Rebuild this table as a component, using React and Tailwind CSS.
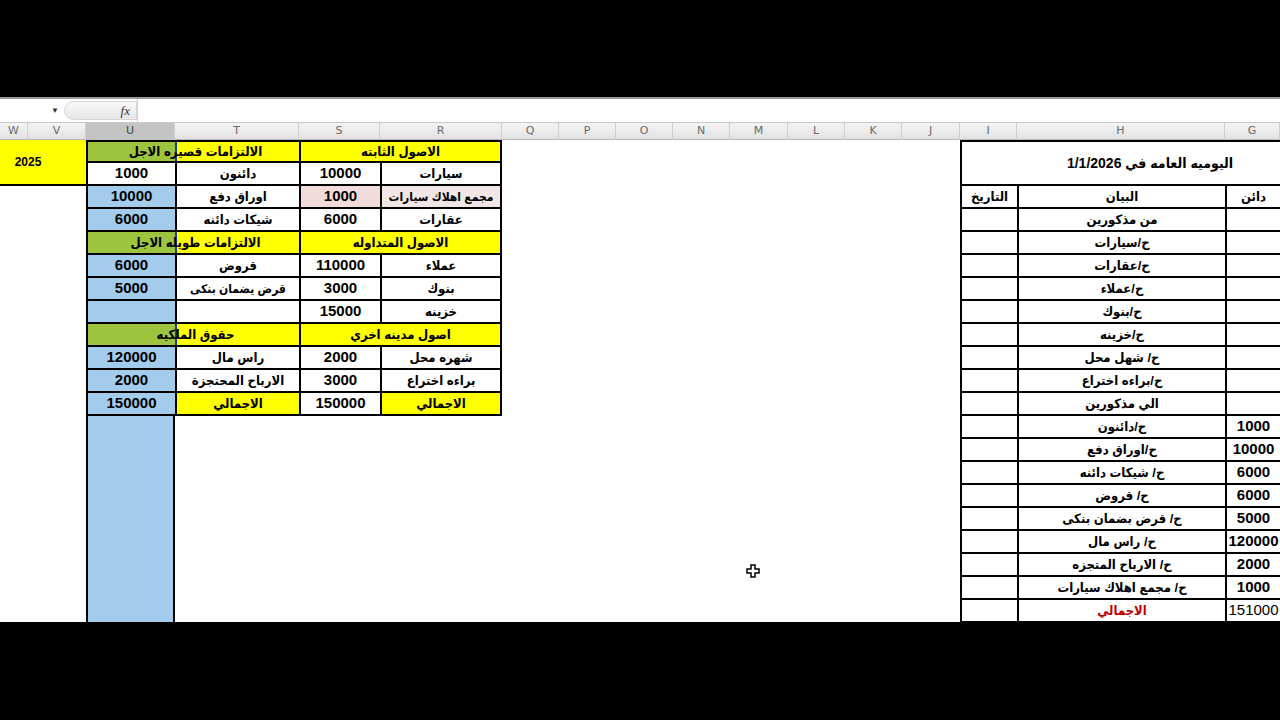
import React from "react";
import clsx from "clsx";

const cols = ["W", "V", "U", "T", "S", "R", "Q", "P", "O", "N", "M", "L", "K", "J", "I", "H", "G"];

const Cell = ({ className, children }) => (
  <div
    dir="rtl"
    className={clsx(
      "flex items-center justify-center overflow-hidden whitespace-nowrap border-black font-bold",
      className
    )}
  >
    {children}
  </div>
);

const journal = [
  ["من مذكورين", ""],
  ["ح/سيارات", ""],
  ["ح/عقارات", ""],
  ["ح/عملاء", ""],
  ["ح/بنوك", ""],
  ["ح/خزينه", ""],
  ["ح/ شهل محل", ""],
  ["ح/براءه اختراع", ""],
  ["الي مذكورين", ""],
  ["ح/دائنون", "1000"],
  ["ح/اوراق دفع", "10000"],
  ["ح/ شيكات دائنه", "6000"],
  ["ح/ قروض", "6000"],
  ["ح/ قرض بضمان بنكى", "5000"],
  ["ح/ راس مال", "120000"],
  ["ح/ الارباح المتجزه", "2000"],
  ["ح/ مجمع اهلاك سيارات", "1000"],
];

const rowStart = [
  "row-start-4", "row-start-5", "row-start-6", "row-start-7", "row-start-8", "row-start-9",
  "row-start-10", "row-start-11", "row-start-12", "row-start-13", "row-start-14", "row-start-15",
  "row-start-16", "row-start-17", "row-start-18", "row-start-19", "row-start-20",
];

const blue = "bg-[#a3cbeb]";
const yellow = "bg-[#ffff00]";
const splitHead = "bg-[linear-gradient(to_right,#9cc43e_87px,#1f3f8f_87px,#1f3f8f_89px,#ffff00_89px)]";

export default function App() {
  return (
    <div className="w-[1280px] h-[720px] overflow-hidden bg-black font-['Liberation_Sans','DejaVu_Sans_Condensed','DejaVu_Sans',sans-serif] text-[13px] text-black">
      <div className="h-[97px] bg-black" />

      {/* formula bar */}
      <div className="h-[26px] flex bg-white border-t-2 border-[#9a9a9a] border-b border-b-[#c9c9c9]">
        <div className="w-[64px] flex items-center justify-end pr-[5px]">
          <span className="text-[8px] text-[#333]">▼</span>
        </div>
        <div className="w-[73px] my-[2px] rounded-l-full bg-[linear-gradient(to_bottom,#f8f8f8,#e6e6e6)] border border-[#d6d6d6] flex items-center justify-end pr-[6px]">
          <span className="font-['Liberation_Serif',serif] italic text-[13px] text-[#333]">fx</span>
        </div>
        <div className="flex-1 border-l border-[#d0d0d0]" />
      </div>

      {/* column header */}
      <div className="h-[17px] grid grid-cols-[28px_58px_89px_124px_81px_122px_57px_57px_57px_57px_58px_57px_57px_58px_57px_208px_55px] bg-[linear-gradient(to_bottom,#f4f4f4,#e2e2e2)] border-b border-[#b8b8b8]">
        {cols.map((c) => (
          <div
            key={c}
            className={clsx(
              "flex items-center justify-center text-[11px] border-r border-[#cfcfcf] font-['DejaVu_Sans',sans-serif]",
              c === "U" ? "bg-[#c4c4c4] text-[#444]" : "text-[#6a6a6a]"
            )}
          >
            {c}
          </div>
        ))}
      </div>

      {/* sheet */}
      <div className="relative h-[482px] overflow-hidden bg-white grid grid-cols-[28px_58px_89px_124px_81px_122px_57px_57px_57px_57px_58px_57px_57px_58px_57px_208px_55px] auto-rows-[23px]">
        <Cell className={clsx("col-start-1 col-span-2 row-start-1 row-span-2 border-b-2 text-[12px] pr-[30px]", yellow)}>2025</Cell>

        {/* left table */}
        <Cell className={clsx("col-start-3 col-span-2 row-start-1 border-l-2 border-t-2 border-b-2 pl-[4px]", splitHead)}>الالتزامات قصيره الاجل</Cell>
        <Cell className={clsx("col-start-5 col-span-2 row-start-1 border-l-2 border-t-2 border-b-2 border-r-2", yellow)}>الاصول الثابته</Cell>

        <Cell className="col-start-3 row-start-2 border-l-2 border-b-2 bg-white text-[15px]">1000</Cell>
        <Cell className="col-start-4 row-start-2 border-l-2 border-b-2">دائنون</Cell>
        <Cell className="col-start-5 row-start-2 border-l-2 border-b-2 text-[15px]">10000</Cell>
        <Cell className="col-start-6 row-start-2 border-l-2 border-b-2 border-r-2">سيارات</Cell>

        <Cell className={clsx("col-start-3 row-start-3 border-l-2 border-b-2 text-[15px]", blue)}>10000</Cell>
        <Cell className="col-start-4 row-start-3 border-l-2 border-b-2">اوراق دفع</Cell>
        <Cell className="col-start-5 row-start-3 border-l-2 border-b-2 bg-[#f2dcdb] text-[15px]">1000</Cell>
        <Cell className="col-start-6 row-start-3 border-l-2 border-b-2 border-r-2 bg-[#f1e6e6] text-[12px]">مجمع اهلاك سيارات</Cell>

        <Cell className={clsx("col-start-3 row-start-4 border-l-2 border-b-2 text-[15px]", blue)}>6000</Cell>
        <Cell className="col-start-4 row-start-4 border-l-2 border-b-2">شيكات دائنه</Cell>
        <Cell className="col-start-5 row-start-4 border-l-2 border-b-2 text-[15px]">6000</Cell>
        <Cell className="col-start-6 row-start-4 border-l-2 border-b-2 border-r-2">عقارات</Cell>

        <Cell className={clsx("col-start-3 col-span-2 row-start-5 border-l-2 border-b-2 pl-[4px]", splitHead)}>الالتزامات طويله الاجل</Cell>
        <Cell className={clsx("col-start-5 col-span-2 row-start-5 border-l-2 border-b-2 border-r-2", yellow)}>الاصول المتداوله</Cell>

        <Cell className={clsx("col-start-3 row-start-6 border-l-2 border-b-2 text-[15px]", blue)}>6000</Cell>
        <Cell className="col-start-4 row-start-6 border-l-2 border-b-2">قروض</Cell>
        <Cell className="col-start-5 row-start-6 border-l-2 border-b-2 text-[15px]">110000</Cell>
        <Cell className="col-start-6 row-start-6 border-l-2 border-b-2 border-r-2">عملاء</Cell>

        <Cell className={clsx("col-start-3 row-start-7 border-l-2 border-b-2 text-[15px]", blue)}>5000</Cell>
        <Cell className="col-start-4 row-start-7 border-l-2 border-b-2 text-[12px]">قرض يضمان بنكى</Cell>
        <Cell className="col-start-5 row-start-7 border-l-2 border-b-2 text-[15px]">3000</Cell>
        <Cell className="col-start-6 row-start-7 border-l-2 border-b-2 border-r-2">بنوك</Cell>

        <Cell className={clsx("col-start-3 row-start-8 border-l-2 border-b-2", blue)} />
        <Cell className="col-start-4 row-start-8 border-l-2 border-b-2" />
        <Cell className="col-start-5 row-start-8 border-l-2 border-b-2 text-[15px]">15000</Cell>
        <Cell className="col-start-6 row-start-8 border-l-2 border-b-2 border-r-2">خزينه</Cell>

        <Cell className={clsx("col-start-3 col-span-2 row-start-9 border-l-2 border-b-2 pl-[4px]", splitHead)}>حقوق الملكيه</Cell>
        <Cell className={clsx("col-start-5 col-span-2 row-start-9 border-l-2 border-b-2 border-r-2", yellow)}>اصول مدينه اخري</Cell>

        <Cell className={clsx("col-start-3 row-start-10 border-l-2 border-b-2 text-[15px]", blue)}>120000</Cell>
        <Cell className="col-start-4 row-start-10 border-l-2 border-b-2">راس مال</Cell>
        <Cell className="col-start-5 row-start-10 border-l-2 border-b-2 text-[15px]">2000</Cell>
        <Cell className="col-start-6 row-start-10 border-l-2 border-b-2 border-r-2">شهره محل</Cell>

        <Cell className={clsx("col-start-3 row-start-11 border-l-2 border-b-2 text-[15px]", blue)}>2000</Cell>
        <Cell className="col-start-4 row-start-11 border-l-2 border-b-2">الارباح المحتجزة</Cell>
        <Cell className="col-start-5 row-start-11 border-l-2 border-b-2 text-[15px]">3000</Cell>
        <Cell className="col-start-6 row-start-11 border-l-2 border-b-2 border-r-2">براءه اختراع</Cell>

        <Cell className={clsx("col-start-3 row-start-12 border-l-2 border-b-2 text-[15px]", blue)}>150000</Cell>
        <Cell className={clsx("col-start-4 row-start-12 border-l-2 border-b-2", yellow)}>الاجمالي</Cell>
        <Cell className="col-start-5 row-start-12 border-l-2 border-b-2 text-[15px]">150000</Cell>
        <Cell className={clsx("col-start-6 row-start-12 border-l-2 border-b-2 border-r-2", yellow)}>الاجمالي</Cell>

        <div className={clsx("col-start-3 row-start-13 row-span-9 border-l-2 border-r-2 border-black", blue)} />

        {/* journal */}
        <Cell className="col-start-15 col-span-3 row-start-1 row-span-2 border-l-2 border-t-2 border-b-2 pl-[58px] text-[14px]">
          اليوميه العامه في 1/1/2026
        </Cell>
        <Cell className="col-start-15 row-start-3 border-l-2 border-b-2">التاريخ</Cell>
        <Cell className="col-start-16 row-start-3 border-l-2 border-b-2">البيان</Cell>
        <Cell className="col-start-17 row-start-3 border-l-2 border-b-2">دائن</Cell>

        {journal.map(([label, amount], i) => (
          <React.Fragment key={label}>
            <Cell className={clsx("col-start-15 border-l-2 border-b-2", rowStart[i])} />
            <Cell className={clsx("col-start-16 border-l-2 border-b-2", rowStart[i])}>{label}</Cell>
            <Cell className={clsx("col-start-17 border-l-2 border-b-2 text-[15px]", rowStart[i])}>{amount}</Cell>
          </React.Fragment>
        ))}

        <Cell className="col-start-15 row-start-21 border-l-2 border-b-2" />
        <Cell className="col-start-16 row-start-21 border-l-2 border-b-2 text-[#c00000]">الاجمالي</Cell>
        <Cell className="col-start-17 row-start-21 border-l-2 border-b-2 font-normal text-[15px]">151000</Cell>

        {/* mouse cursor */}
        <svg className="absolute left-[746px] top-[424px]" width="14" height="14" viewBox="0 0 14 14">
          <path d="M5 1h4v4h4v4H9v4H5V9H1V5h4z" fill="#fff" stroke="#000" strokeWidth="1.5" />
        </svg>
      </div>
    </div>
  );
}
